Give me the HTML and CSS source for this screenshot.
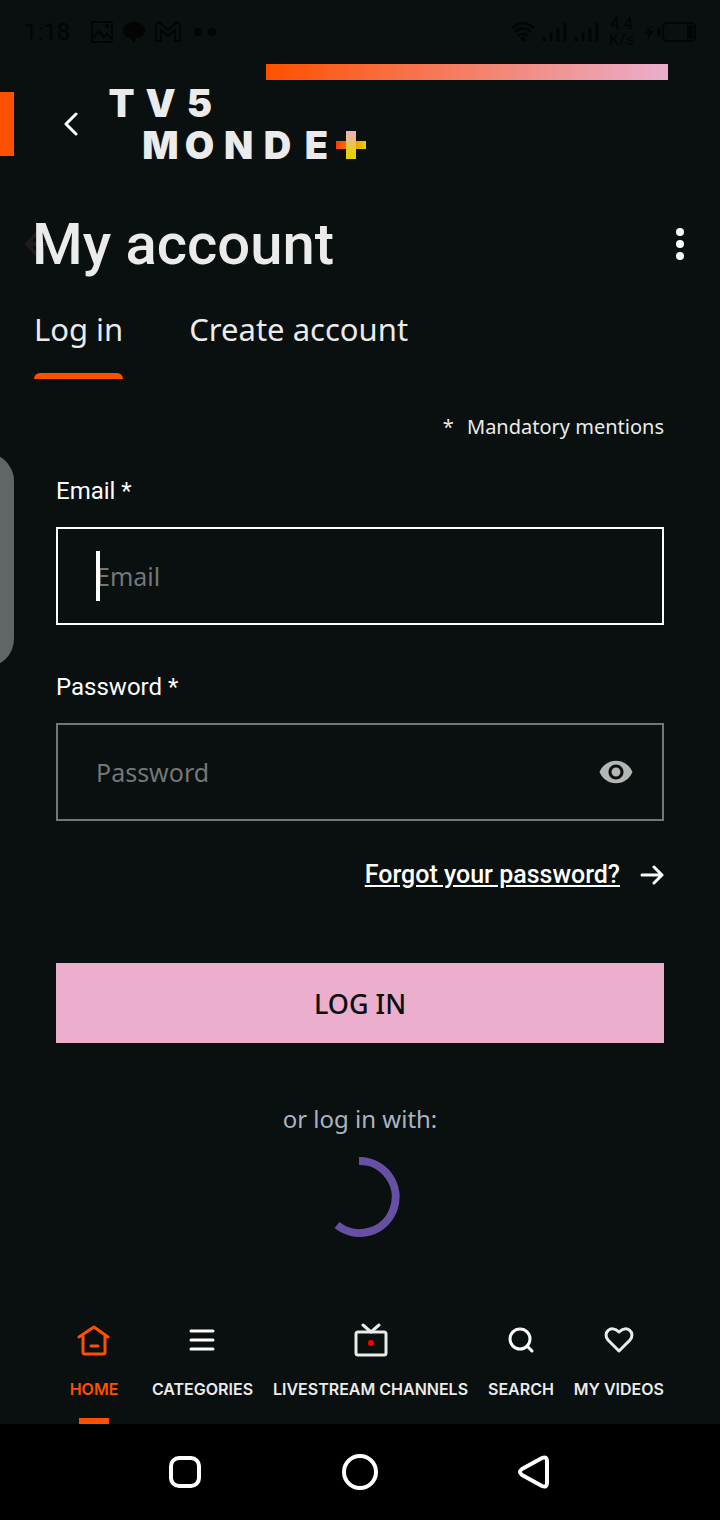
FILE: index.html
```
<!DOCTYPE html>
<html lang="en">
<head>
    <meta charset="UTF-8">
    <meta name="viewport" content="width=device-width, initial-scale=1.0">
    <title>My account - TV5MONDE+</title>
    <link rel="stylesheet" href="styles.css">
</head>
<body>
    <div class="status-bar">
        <div class="status-group">
            <span class="clock">1:18</span>
            <svg width="24" height="24" viewBox="0 0 24 24" fill="none" stroke="currentColor" stroke-width="2"><rect x="2" y="2" width="20" height="20" rx="2"/><path d="M3 18l6-7 5 6 3-3 5 5"/><circle cx="17" cy="6" r="1"/></svg>
            <svg width="24" height="24" viewBox="0 0 24 24" fill="currentColor"><path d="M12 2c6 0 11 3 11 8s-4 8-9 8l-2 5-4-5C3 17 1 14 1 10s5-8 11-8z"/></svg>
            <svg width="28" height="24" viewBox="0 0 28 24" fill="none" stroke="currentColor" stroke-width="2" stroke-linejoin="round"><path d="M2 21V5l3-3 9 8 9-8 3 3v16h-5V10l-7 6-7-6v11z"/></svg>
            <svg class="more" width="24" height="24" viewBox="0 0 24 24" fill="currentColor"><circle cx="5" cy="12" r="4"/><circle cx="19" cy="12" r="4"/></svg>
        </div>
        <div class="status-group right">
            <svg width="24" height="20" viewBox="0 0 24 20" fill="none" stroke="currentColor" stroke-width="2.5"><path d="M1 6c7-6 15-6 22 0M4 10c5-5 11-5 16 0M7 14c3-3 7-3 10 0"/><circle cx="12" cy="17" r="1"/></svg>
            <svg width="25" height="20" viewBox="0 0 25 20" stroke="currentColor" stroke-width="3" stroke-linecap="round"><path d="M2 16v2M9 12v6M16 7v11M23 2v16"/></svg>
            <svg width="25" height="20" viewBox="0 0 25 20" stroke="currentColor" stroke-width="3" stroke-linecap="round"><path d="M2 16v2M9 12v6M16 7v11M23 2v16"/></svg>
            <span class="speed">4.4<br>K/s</span>
            <svg width="52" height="20" viewBox="0 0 52 20" fill="none" stroke="currentColor" stroke-width="2"><path d="M7 3l-6 9h4l-2 6 7-9H6z" fill="currentColor" stroke="none"/><path d="M15 6v8" stroke-width="3"/><rect x="19" y="1" width="32" height="18" rx="4"/><rect x="44" y="4" width="4" height="12" rx="1" fill="currentColor"/></svg>
        </div>
    </div>

    <div class="accent-bar"></div>

    <header class="header">
        <span class="side-mark"></span>
        <button class="icon-btn back" type="button" aria-label="Back">
            <svg width="16" height="24" viewBox="0 0 16 24" fill="none" stroke="#fff" stroke-width="3" stroke-linecap="round" stroke-linejoin="round"><path d="M13 2L3 12l10 10"/></svg>
        </button>
        <a class="logo" href="#" aria-label="TV5MONDE+">
            <span>T</span><span>V</span><span>5</span>
            <span class="second">M</span><span>O</span><span>N</span><span>D</span><span>E</span>
            <svg class="plus" width="30" height="28" viewBox="0 0 30 28">
                <defs>
                    <linearGradient id="plusH"><stop offset="0" stop-color="#ff3c00"/><stop offset="1" stop-color="#e6d200"/></linearGradient>
                    <linearGradient id="plusV" x2="0" y2="1"><stop offset="0" stop-color="#ebaecd"/><stop offset=".8" stop-color="#e6d200"/></linearGradient>
                </defs>
                <rect y="10" width="30" height="8" fill="url(#plusH)"/>
                <rect x="10" width="10" height="28" fill="url(#plusV)"/>
            </svg>
        </a>
    </header>

    <div class="title-row">
        <svg class="ghost-arrow" width="26" height="26" viewBox="0 0 26 26" fill="none" stroke="#1f1a1f" stroke-width="4"><path d="M13 2L3 13l10 11M3 13h22"/></svg>
        <h1>My account</h1>
        <button class="icon-btn" type="button" aria-label="More options">
            <svg width="8" height="32" viewBox="0 0 8 32" fill="#fff"><circle cx="4" cy="4" r="4"/><circle cx="4" cy="16" r="4"/><circle cx="4" cy="28" r="4"/></svg>
        </button>
    </div>

    <nav class="tabs">
        <a class="tab active" href="#">Log in</a>
        <a class="tab" href="#">Create account</a>
    </nav>

    <main class="content">
        <form class="login-form">
            <p class="mandatory"><span>*</span> Mandatory mentions</p>

            <label for="email">Email *</label>
            <div class="field focused">
                <span class="caret"></span>
                <input id="email" type="email" placeholder="Email">
            </div>

            <label for="password">Password *</label>
            <div class="field">
                <input id="password" type="password" placeholder="Password">
                <button class="icon-btn" type="button" aria-label="Show password">
                    <svg width="36" height="36" viewBox="0 0 24 24" fill="#b4b6b6"><path d="M12 4.500C7 4.500 2.730 7.610 1 12c1.730 4.390 6 7.500 11 7.500s9.270-3.110 11-7.500c-1.730-4.390-6-7.500-11-7.500zM12 17c-2.760 0-5-2.240-5-5s2.240-5 5-5 5 2.240 5 5-2.240 5-5 5zm0-8c-1.660 0-3 1.340-3 3s1.340 3 3 3 3-1.340 3-3-1.340-3-3-3z"/></svg>
                </button>
            </div>

            <a class="forgot" href="#">
                <span>Forgot your password?</span>
                <svg width="24" height="20" viewBox="0 0 24 20" fill="none" stroke="#fff" stroke-width="3" stroke-linecap="round" stroke-linejoin="round"><path d="M2 10h20M14 2l8 8-8 8"/></svg>
            </a>

            <button class="submit" type="submit">LOG IN</button>
        </form>

        <p class="alt-login">or log in with:</p>
        <svg class="spinner" width="80" height="80" viewBox="0 0 80 80" fill="none" stroke="#6650a4" stroke-width="8"><path d="M39 4A36 36 0 1 1 17 68"/></svg>
    </main>

    <nav class="bottom-nav">
        <a class="nav-item active" href="#">
            <svg width="34" height="34" viewBox="0 0 34 34" fill="none" stroke="currentColor" stroke-width="3" stroke-linecap="round" stroke-linejoin="round"><path d="M2 14L17 4l14 10M6 13v16q0 2 2 2h18q2 0 2-2V13M14 23h7"/></svg>
            <span>HOME</span>
        </a>
        <a class="nav-item" href="#">
            <svg width="34" height="34" viewBox="0 0 34 34" fill="none" stroke="#fff" stroke-width="3" stroke-linecap="round"><path d="M6 8h22M6 17h22M6 26h22"/></svg>
            <span>CATEGORIES</span>
        </a>
        <a class="nav-item" href="#">
            <svg width="34" height="34" viewBox="0 0 34 34" fill="none" stroke="currentColor" stroke-width="3" stroke-linecap="round" stroke-linejoin="round"><rect x="2" y="9" width="30" height="23" rx="2"/><path d="M9 2l8 7 8-7"/><circle cx="17" cy="20" r="3" fill="#f00" stroke="none"/></svg>
            <span>LIVESTREAM CHANNELS</span>
        </a>
        <a class="nav-item" href="#">
            <svg width="34" height="34" viewBox="0 0 34 34" fill="none" stroke="#fff" stroke-width="3" stroke-linecap="round"><circle cx="16" cy="16" r="10"/><path d="M23 23l5 5"/></svg>
            <span>SEARCH</span>
        </a>
        <a class="nav-item" href="#">
            <svg width="34" height="34" viewBox="0 0 34 34" fill="none" stroke="currentColor" stroke-width="3" stroke-linejoin="round"><path d="M17 28L6 17C0 10 9 1 17 9c8-8 17 1 11 8z"/></svg>
            <span>MY VIDEOS</span>
        </a>
    </nav>

    <div class="system-nav">
        <button class="icon-btn" type="button" aria-label="Recent apps">
            <svg width="36" height="36" viewBox="0 0 36 36" fill="none" stroke="#fff" stroke-width="4"><rect x="4" y="4" width="28" height="28" rx="8"/></svg>
        </button>
        <button class="icon-btn" type="button" aria-label="Home screen">
            <svg width="36" height="36" viewBox="0 0 36 36" fill="none" stroke="#fff" stroke-width="4"><circle cx="18" cy="18" r="16"/></svg>
        </button>
        <button class="icon-btn" type="button" aria-label="System back">
            <svg width="36" height="36" viewBox="0 0 36 36" fill="none" stroke="#fff" stroke-width="4" stroke-linejoin="round"><path d="M5 15L25 4q5-2 5 3v22q0 5-5 3L5 21q-4-3 0-6z"/></svg>
        </button>
    </div>

    <div class="edge-handle"></div>
</body>
</html>
```
FILE: styles.css
```
* {
    box-sizing: border-box;
}

body {
    position: relative;
    display: flex;
    flex-direction: column;
    min-height: 100vh;
    margin: 0;
    background: #0a0f0f;
    color: #ebebeb;
    font-family: "Noto Sans", sans-serif;
}

a {
    color: inherit;
    text-decoration: none;
}

svg {
    display: block;
    flex-shrink: 0;
}

.icon-btn {
    padding: 0;
    border: 0;
    background: none;
}

.status-bar {
    display: flex;
    justify-content: space-between;
    align-items: center;
    height: 64px;
    padding: 0 24px;
    color: #030505;
    font-family: Roboto, sans-serif;
}

.status-group {
    display: flex;
    align-items: center;
    gap: 8px;
}

.status-group.right {
    gap: 7px;
}

.clock {
    margin-right: 12px;
    font-size: 24px;
}

.more {
    margin-left: 3px;
}

.speed {
    margin: 0 3px;
    font-size: 16px;
    line-height: 16px;
    text-align: center;
}

.accent-bar {
    height: 16px;
    margin: 0 52px 0 37%;
    background: linear-gradient(90deg, #ff5000, #ebaecd);
}

.header {
    display: flex;
    align-items: center;
    height: 88px;
}

.side-mark {
    width: 14px;
    height: 64px;
    background: #ff5000;
}

.back {
    margin: 0 23px 0 49px;
}

.logo {
    display: grid;
    grid-template-columns: repeat(7, 39px);
    row-gap: 14px;
    justify-items: center;
    font-family: Inter, sans-serif;
    font-size: 38px;
    font-weight: 900;
    line-height: 28px;
}

.second {
    grid-column: 2;
}

.plus {
    justify-self: start;
}

.title-row {
    position: relative;
    display: flex;
    justify-content: space-between;
    align-items: center;
    padding: 40px 36px 0 32px;
}

.ghost-arrow {
    position: absolute;
    left: 24px;
    bottom: 23px;
    z-index: -1;
}

h1 {
    margin: 0;
    font-family: Roboto, sans-serif;
    font-size: 58px;
    font-weight: 500;
    line-height: 72px;
}

.tabs {
    display: flex;
    gap: 66px;
    padding: 20px 34px 0;
}

.tab {
    height: 79px;
    font-size: 31px;
    line-height: 58px;
}

.tab.active::after {
    content: "";
    display: block;
    height: 6px;
    margin-top: 15px;
    border-radius: 6px 6px 0 0;
    background: #ff5000;
}

.content {
    flex: 1;
    padding: 32px 56px 0;
}

.login-form {
    display: flex;
    flex-direction: column;
}

.mandatory {
    margin: 0 0 32px;
    font-size: 20px;
    line-height: 32px;
    text-align: right;
}

.mandatory span {
    margin-right: 8px;
}

label {
    margin-bottom: 20px;
    color: #fff;
    font-family: Roboto, sans-serif;
    font-size: 24px;
    line-height: 32px;
}

.field {
    position: relative;
    display: flex;
    align-items: center;
    height: 98px;
    margin-bottom: 46px;
    padding: 0 28px 0 38px;
    border: 2px solid #747777;
}

.field.focused {
    border-color: #fff;
}

.field input {
    flex: 1;
    min-width: 0;
    height: 48px;
    padding: 0;
    border: 0;
    outline: 0;
    background: none;
    color: #fff;
    font-family: inherit;
    font-size: 25px;
}

.field input::placeholder {
    color: #747777;
    opacity: 1;
}

.caret {
    position: absolute;
    left: 38px;
    width: 4px;
    height: 50px;
    background: #fff;
}

.forgot {
    display: flex;
    justify-content: flex-end;
    align-items: center;
    gap: 20px;
    margin-top: -8px;
    color: #fff;
    font-family: Roboto, sans-serif;
    font-size: 25px;
    font-weight: 500;
    line-height: 32px;
}

.forgot span {
    text-decoration: underline;
}

.submit {
    height: 80px;
    margin-top: 72px;
    border: 0;
    background: #ebaecd;
    color: #0a0f0f;
    font-family: "Noto Sans", sans-serif;
    font-size: 27px;
    font-weight: 500;
}

.alt-login {
    margin: 60px 0 22px;
    color: #abb4c4;
    font-size: 24px;
    line-height: 32px;
    text-align: center;
}

.spinner {
    margin: 0 auto;
}

.bottom-nav {
    display: flex;
    justify-content: space-between;
    height: 104px;
    padding: 0 56px;
}

.nav-item {
    display: flex;
    flex-direction: column;
    align-items: center;
    padding-top: 3px;
    font-family: Inter, sans-serif;
    font-size: 16px;
    font-weight: 600;
    line-height: 24px;
    white-space: nowrap;
}

.nav-item span {
    margin-top: 20px;
}

.nav-item.active {
    min-width: 76px;
    color: #ff5000;
}

.nav-item.active::after {
    content: "";
    width: 30px;
    height: 6px;
    margin-top: auto;
    background: #ff5000;
}

.system-nav {
    display: flex;
    justify-content: space-around;
    align-items: center;
    height: 96px;
    padding: 0 98px;
    background: #000;
}

.edge-handle {
    position: absolute;
    top: 453px;
    left: -14px;
    width: 28px;
    height: 214px;
    border-radius: 0 28px 28px 0;
    background: #616565;
}
```
